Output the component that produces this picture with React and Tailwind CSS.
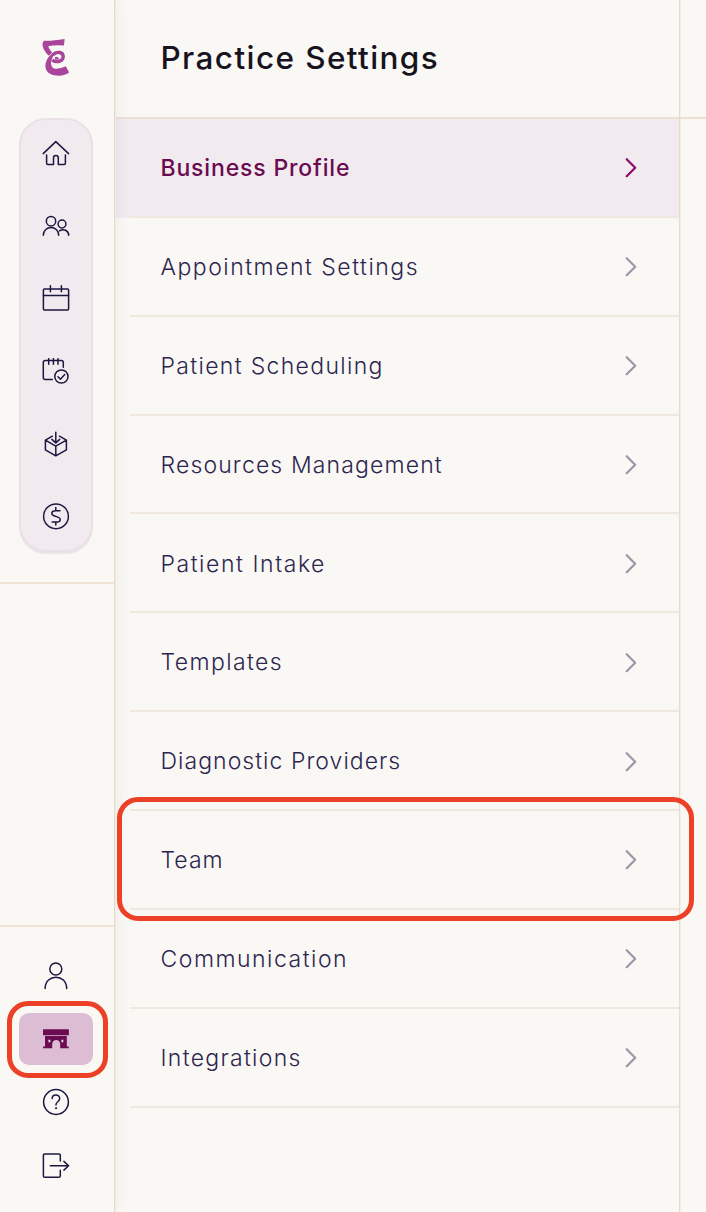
import React from "react";

const items = [
  { label: "Business Profile", spacing: "tracking-[0.84px]", active: true },
  { label: "Appointment Settings", spacing: "tracking-[1.5px]" },
  { label: "Patient Scheduling", spacing: "tracking-[1.33px]" },
  { label: "Resources Management", spacing: "tracking-[1.14px]" },
  { label: "Patient Intake", spacing: "tracking-[1.56px]" },
  { label: "Templates", spacing: "tracking-[1.4px]" },
  { label: "Diagnostic Providers", spacing: "tracking-[1.04px]" },
  { label: "Team", spacing: "tracking-[1px]", marked: true },
  { label: "Communication", spacing: "tracking-[1.5px]" },
  { label: "Integrations", spacing: "tracking-[1.3px]" },
];

function Icon({ children }) {
  return (
    <svg
      width="28"
      height="28"
      viewBox="0 0 28 28"
      fill="none"
      stroke="#1d1740"
      strokeWidth="1.5"
      strokeLinecap="round"
      strokeLinejoin="round"
      className="block shrink-0"
    >
      {children}
    </svg>
  );
}

const HomeIcon = () => (
  <Icon>
    <path d="M1.2 13.6 13.8 1.6l12.8 12M4.6 15v8.3q0 1.2 1.2 1.2h5.7V18q0-2.4 2.4-2.4t2.4 2.4v6.5h5.9q1.2 0 1.2-1.2V15" />
  </Icon>
);
const UsersIcon = () => (
  <Icon>
    <circle cx="9" cy="8.2" r="4.7" />
    <path d="M1.3 22.2c.2-10.2 15.2-10.2 15.4 0M17.4 17.8c4-2.6 9.2-.4 9.3 4.4" />
    <circle cx="20" cy="11" r="3.9" />
  </Icon>
);
const CalendarIcon = () => (
  <Icon>
    <rect x="1.4" y="4.1" width="25.2" height="21" rx="1" />
    <path d="M1.4 10.6h25.2M8.4.8v5.9M19.4.8v5.9" />
  </Icon>
);
const NotepadIcon = () => (
  <Icon>
    <path d="M10.3 21.4H3.3q-2 0-2-2V4.5q0-2 2-2h16q2 0 2 2v4.8M6.7.7v5.6M11.4.7v5.6M16 .7v5.6" />
    <circle cx="19.4" cy="18.5" r="6.6" />
    <path d="m16 18.8 2.4 2.4 4.3-4.7" />
  </Icon>
);
const BoxIcon = () => (
  <Icon>
    <path d="m10.4 5.2-7 4v9.6l10.4 6 10.6-6V9.2l-7-4M3.4 9.2l10.4 6 10.6-6M13.8 15.2v9.6M13.8 1.3v10.6M9.9 8.4l3.9 3.5 3.9-3.5" />
  </Icon>
);
const DollarIcon = () => (
  <Icon>
    <circle cx="14" cy="13.3" r="12.4" />
    <path d="M18 7.7h-4.7c-4.2 0-4.6 4-1.3 5.1l3.8 1.3c3.7 1.2 3 4.9-.6 4.9h-5M13.8 4.5v3.2M13.8 19v2.9" />
  </Icon>
);
const UserIcon = () => (
  <Icon>
    <circle cx="13.8" cy="7" r="6" />
    <path d="M3.1 26.4c.2-15 21.4-15 21.6 0" />
  </Icon>
);
const StoreIcon = () => (
  <svg width="28" height="28" viewBox="0 0 28 28" className="block shrink-0">
    <path fill="#6b0c53" d="M1 4.8q0-.6.6-.6h24.7q.6 0 .6.6v4.9q0 .6-.6.6H1.6q-.6 0-.6-.6zM3 11.1h21.8v10.3h2v1.8h-8.6v-4.3c0-5.2-8-5.2-8 0v4.3H1v-1.8h2z" />
    <path fill="#f1e6ee" d="M6.5 14.7h1.8v2.5H6.5zM19.5 14.7h1.8v2.5h-1.8z" />
  </svg>
);
const HelpIcon = () => (
  <Icon>
    <circle cx="14" cy="14" r="12.4" />
    <path d="M10.2 10.6c0-4.7 7.5-4.7 7.5-.1 0 3.3-3.7 3.1-3.7 6v.5" />
    <circle cx="14" cy="20.2" r=".6" fill="#1d1740" strokeWidth="1" />
  </Icon>
);
const LogoutIcon = () => (
  <Icon>
    <path d="M18.3 9.1V3.3q0-1.4-1.4-1.4H2.8q-1.4 0-1.4 1.4v20.6q0 1.4 1.4 1.4h14.1q1.4 0 1.4-1.4v-5.6M8.3 13.8h18M21.9 9.4l4.7 4.4-4.7 4.3" />
  </Icon>
);

const Logo = () => (
  <svg width="28" height="40" viewBox="0 0 28 40" className="block">
    <path fill="#a9469b" d="M2 2.7Q8 3.4 22.6 1.1L22 7.4Q13 6.6 6.2 8.2q1.3 3.6 4 6.2l-3.4 3.4C3.4 14.6.6 10.3.5 6.5Q.5 4 2 2.7z" />
    <path
      fill="none"
      stroke="#a9469b"
      strokeWidth="3.4"
      d="M10.2 22.2c4.2 2.6 11 1.4 11-3.6 0-5-6.8-5.6-10.6-1.4"
    />
    <path fill="#a9469b" d="M12.4 14.2 9.8 21.5c-1.4 3-1 6 .8 7.9 2.8 2.9 8 .7 13.2-1.2l3.3 6.4C21.7 39.4 4.9 39.3 3.5 29.5c-.7-5.4 2.7-12.3 8.9-15.3z" />
    <path fill="#a9469b" d="M13 19.3q1.5-1.3 2.6.2l1.6.3-1.2 2-3-.6z" />
  </svg>
);

function NavButton({ children, active }) {
  return (
    <a className="flex h-[63.3px] w-full shrink-0 items-center justify-center">
      <span
        className={
          active
            ? "relative flex h-[52px] w-[74px] items-center justify-center rounded-[10px] bg-[#dcbdd3]"
            : "flex"
        }
      >
        {children}
        {active && (
          <span className="absolute -top-[12px] -left-[12.5px] h-[77px] w-[101px] rounded-[21px] border-[5px] border-[#ec4127]" />
        )}
      </span>
    </a>
  );
}

function MenuItem({ label, spacing, active, marked }) {
  return (
    <li
      className={`relative flex h-[98.86px] shrink-0 pl-[15px] ${active ? "bg-[#f1eaef]" : ""}`}
    >
      <a
        className={`flex flex-1 items-center justify-between border-b-2 border-[#eee8df] pt-[2px] pr-[42.5px] pl-[30.5px] text-[23px] whitespace-nowrap ${spacing} ${
          active ? "font-medium text-[#6a0a4f]" : "font-light text-[#2d2650]"
        }`}
      >
        {label}
        <svg
          width="12"
          height="22"
          viewBox="0 0 12 22"
          fill="none"
          stroke={active ? "#8b0a6b" : "#9b96a8"}
          strokeWidth="2.2"
          strokeLinecap="round"
          strokeLinejoin="round"
        >
          <path d="m1.7 2.2 8.5 8.5-8.5 8.5" />
        </svg>
      </a>
      {marked && (
        <span className="absolute -top-[14px] left-[2px] z-20 h-[124px] w-[577px] rounded-[21px] border-[5px] border-[#ec4127]" />
      )}
    </li>
  );
}

export default function App() {
  return (
    <div className="flex h-[1212px] w-[706px] overflow-hidden bg-[#faf8f4] font-['Inter','Work_Sans',sans-serif]">
      <aside className="z-10 flex w-[115px] shrink-0 flex-col border-r border-[#e6dac6] bg-[#faf8f4] shadow-[1px_0_0_#f1ebe1,2px_0_14px_rgba(40,30,80,0.06)]">
        <div className="flex h-[118px] shrink-0 justify-center pt-[38px] pr-[2px]">
          <Logo />
        </div>
        <nav className="ml-[19px] flex h-[434px] w-[74px] shrink-0 flex-col items-center gap-[44.7px] rounded-[27px] border-2 border-[#ebdfe8] bg-[#f1eaef] pt-5 shadow-[0_2px_1px_rgba(90,60,110,0.1)]">
          <HomeIcon />
          <UsersIcon />
          <CalendarIcon />
          <NotepadIcon />
          <BoxIcon />
          <DollarIcon />
        </nav>
        <div className="mt-[30px] h-[345px] shrink-0 border-y-2 border-[#ede4d6]" />
        <nav className="flex flex-col items-center pt-[17px] pr-[2px]">
          <NavButton><UserIcon /></NavButton>
          <NavButton active><StoreIcon /></NavButton>
          <NavButton><HelpIcon /></NavButton>
          <NavButton><LogoutIcon /></NavButton>
        </nav>
      </aside>
      <main className="flex w-[565px] shrink-0 flex-col border-r border-[#e6dccc] shadow-[1px_0_0_#f3eee6]">
        <header className="flex h-[119px] shrink-0 items-center border-b-2 border-[#ebe1d2] pb-[1px] pl-[45.5px]">
          <h1 className="text-[31.5px] font-medium tracking-[1.4px] whitespace-nowrap text-[#17141f]">
            Practice Settings
          </h1>
        </header>
        <ul className="flex flex-col">
          {items.map((item) => (
            <MenuItem key={item.label} {...item} />
          ))}
        </ul>
      </main>
      <section className="flex flex-1 flex-col">
        <div className="h-[119px] border-b-2 border-[#ebe1d2]" />
      </section>
    </div>
  );
}
